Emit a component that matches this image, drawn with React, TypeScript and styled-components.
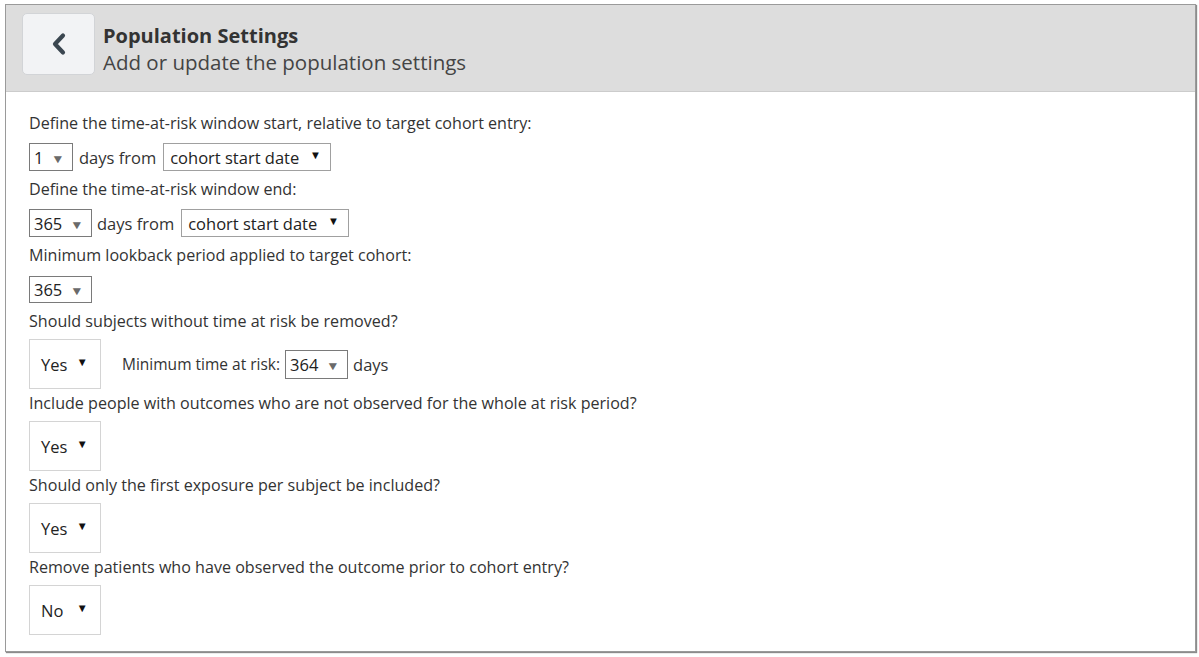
import React from "react";
import styled, { createGlobalStyle } from "styled-components";

const Global = createGlobalStyle`
  html, body { margin: 0; padding: 0; background: #ffffff; }
  body { font-family: "Open Sans", "Noto Sans", sans-serif; color: #333333; }
  * { box-sizing: border-box; }
`;

const Page = styled.div`
  padding: 4px 3px 4px 5px;
`;

const Frame = styled.div`
  border: 1px solid #9a9a9a;
  box-shadow: 1px 1px 1px #8c8c8c;
  background: #ffffff;
`;

const Header = styled.div`
  display: flex;
  align-items: flex-start;
  gap: 8px;
  background: #dddddd;
  border-bottom: 1px solid #cccccc;
  padding: 8px 16px 15px 16px;
`;

const BackButton = styled.button`
  width: 73px;
  height: 62px;
  display: flex;
  align-items: center;
  justify-content: center;
  background: #f2f3f5;
  border: 1px solid #d2d4d7;
  border-radius: 5px;
  padding: 0;
  cursor: pointer;
`;

const HeaderText = styled.div`
  display: flex;
  flex-direction: column;
  padding-top: 9px;
`;

const Title = styled.div`
  font-size: 20px;
  font-weight: 700;
  line-height: 27px;
  color: #333333;
`;

const Subtitle = styled.div`
  font-size: 20.5px;
  font-weight: 400;
  line-height: 27px;
  color: #444444;
`;

const Body = styled.div`
  display: flex;
  flex-direction: column;
  padding: 21px 22px 12px 23px;
`;

const Label = styled.div`
  font-size: 16.1px;
  line-height: 20px;
  color: #333333;
  white-space: nowrap;
`;

const Row = styled.div<{ $big?: boolean }>`
  display: flex;
  align-items: center;
  margin: ${(p) => (p.$big ? "8px 0 4px" : "10px 0 8px")};
  height: ${(p) => (p.$big ? 50 : 28)}px;
  font-size: 16px;
`;

const Inline = styled.span<{ $ml?: number; $mr?: number }>`
  margin-left: ${(p) => p.$ml ?? 6}px;
  margin-right: ${(p) => p.$mr ?? 7}px;
  font-size: 16.5px;
  color: #333333;
  white-space: nowrap;
`;

const InlineSmall = styled(Inline)`
  font-size: 15.5px;
`;

const SmallSelect = styled.div<{ $w: number; $h?: number }>`
  display: flex;
  align-items: center;
  justify-content: space-between;
  width: ${(p) => p.$w}px;
  height: ${(p) => p.$h ?? 28}px;
  border: 1px solid #7a7a7a;
  padding: 0 8px 0 4px;
  font-size: 16.5px;
  color: #222222;
  background: #ffffff;
`;

const GrayArrow = styled.span`
  font-size: 12px;
  color: #6a6a6a;
  transform: scaleX(1.15);
  margin-top: 2px;
`;

const BlackArrow = styled.span`
  font-size: 11.5px;
  color: #111111;
  margin-bottom: 6px;
`;

const WideSelect = styled.div<{ $w: number }>`
  display: flex;
  align-items: center;
  justify-content: space-between;
  width: ${(p) => p.$w}px;
  height: 28px;
  border: 1px solid #a0a0a0;
  padding: 0 9px 0 6px;
  font-size: 16.5px;
  color: #222222;
  background: #ffffff;
`;

const BigSelect = styled.div`
  display: flex;
  align-items: center;
  justify-content: space-between;
  width: 72px;
  height: 50px;
  border: 1px solid #d4d4d4;
  padding: 0 12px 0 11px;
  font-size: 16.5px;
  color: #222222;
  background: #ffffff;
`;

const Chevron = () => (
  <svg width="20" height="24" viewBox="0 0 20 24" aria-hidden="true">
    <polyline
      points="14,3.5 6,12 14,20.5"
      fill="none"
      stroke="#3b4650"
      strokeWidth="4.2"
      strokeLinecap="round"
      strokeLinejoin="round"
    />
  </svg>
);

const Small = ({ value, w, h }: { value: string; w: number; h?: number }) => (
  <SmallSelect $w={w} $h={h}>
    <span>{value}</span>
    <GrayArrow>▼</GrayArrow>
  </SmallSelect>
);

const Big = ({ value }: { value: string }) => (
  <BigSelect>
    <span>{value}</span>
    <BlackArrow>▼</BlackArrow>
  </BigSelect>
);

export default function App() {
  return (
    <>
      <Global />
      <Page>
        <Frame>
          <Header>
            <BackButton aria-label="Back">
              <Chevron />
            </BackButton>
            <HeaderText>
              <Title>Population Settings</Title>
              <Subtitle>Add or update the population settings</Subtitle>
            </HeaderText>
          </Header>
          <Body>
            <Label>Define the time-at-risk window start, relative to target cohort entry:</Label>
            <Row>
              <Small value="1" w={44} />
              <Inline>days from</Inline>
              <WideSelect $w={168}>
                <span>cohort start date</span>
                <BlackArrow>▼</BlackArrow>
              </WideSelect>
            </Row>
            <Label>Define the time-at-risk window end:</Label>
            <Row>
              <Small value="365" w={63} />
              <Inline $ml={5}>days from</Inline>
              <WideSelect $w={168}>
                <span>cohort start date</span>
                <BlackArrow>▼</BlackArrow>
              </WideSelect>
            </Row>
            <Label>Minimum lookback period applied to target cohort:</Label>
            <Row>
              <Small value="365" w={63} h={27} />
            </Row>
            <Label>Should subjects without time at risk be removed?</Label>
            <Row $big>
              <Big value="Yes" />
              <InlineSmall $ml={21} $mr={5}>Minimum time at risk:</InlineSmall>
              <Small value="364" w={63} h={29} />
              <Inline $ml={5}>days</Inline>
            </Row>
            <Label>Include people with outcomes who are not observed for the whole at risk period?</Label>
            <Row $big>
              <Big value="Yes" />
            </Row>
            <Label>Should only the first exposure per subject be included?</Label>
            <Row $big>
              <Big value="Yes" />
            </Row>
            <Label>Remove patients who have observed the outcome prior to cohort entry?</Label>
            <Row $big>
              <Big value="No" />
            </Row>
          </Body>
        </Frame>
      </Page>
    </>
  );
}
